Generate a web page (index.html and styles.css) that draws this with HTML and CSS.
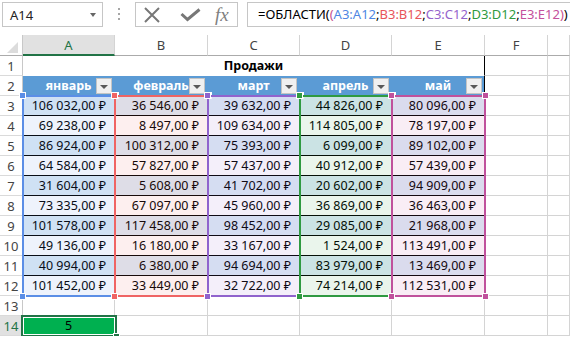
FILE: index.html
```html
<!DOCTYPE html>
<html lang="ru">
<head>
    <meta charset="UTF-8">
    <meta name="viewport" content="width=device-width, initial-scale=1.0">
    <title>Продажи</title>
    <link rel="stylesheet" href="styles.css">
</head>
<body>
    <div class="formula-bar">
        <div class="name-box">A14<span class="caret"></span></div>
        <div class="grip"><i></i><i></i><i></i></div>
        <div class="fx-buttons">
            <svg class="ico-cancel" width="18" height="16" viewBox="0 0 18 16">
                <path d="M2 1 L16 15 M16 1 L2 15" stroke="#777" stroke-width="2" fill="none"/>
            </svg>
            <svg class="ico-enter" width="21" height="14" viewBox="0 0 21 14">
                <path d="M1.5 6 L7.5 11.5 L19.5 1.5" stroke="#777" stroke-width="3" fill="none"/>
            </svg>
            <span class="fx">fx</span>
        </div>
        <div class="formula">=ОБЛАСТИ(<span class="paren">(</span><span class="ref-a">A3:A12</span>;<span class="ref-b">B3:B12</span>;<span class="ref-c">C3:C12</span>;<span class="ref-d">D3:D12</span>;<span class="ref-e">E3:E12</span><span class="paren">)</span>)</div>
    </div>

    <div class="sheet">
        <!-- column headers -->
        <div class="row">
            <div class="cell corner">
                <svg width="11" height="11" viewBox="0 0 11 11"><path d="M11 0 L11 11 L0 11 Z" fill="#dcdcdc"/></svg>
            </div>
            <div class="cell ch sel">A</div>
            <div class="cell ch">B</div>
            <div class="cell ch">C</div>
            <div class="cell ch">D</div>
            <div class="cell ch">E</div>
            <div class="cell ch">F</div>
            <div class="cell ch"></div>
        </div>

        <div class="row">
            <div class="cell rh">1</div>
            <div class="cell title">Продажи</div>
            <div class="cell"></div>
            <div class="cell"></div>
        </div>

        <div class="row">
            <div class="cell rh">2</div>
            <div class="cell th"><span>январь</span><b class="filter"></b></div>
            <div class="cell th"><span>февраль</span><b class="filter"></b></div>
            <div class="cell th"><span>март</span><b class="filter"></b></div>
            <div class="cell th"><span>апрель</span><b class="filter"></b></div>
            <div class="cell th last"><span>май</span><b class="filter"></b></div>
            <div class="cell"></div>
            <div class="cell"></div>
        </div>

        <div class="row odd">
            <div class="cell rh">3</div>
            <div class="cell n">106 032,00 ₽</div>
            <div class="cell n">36 546,00 ₽</div>
            <div class="cell n">39 632,00 ₽</div>
            <div class="cell n">44 826,00 ₽</div>
            <div class="cell n">80 096,00 ₽</div>
            <div class="cell"></div>
            <div class="cell"></div>
        </div>
        <div class="row">
            <div class="cell rh">4</div>
            <div class="cell n">69 238,00 ₽</div>
            <div class="cell n">8 497,00 ₽</div>
            <div class="cell n">109 634,00 ₽</div>
            <div class="cell n">114 805,00 ₽</div>
            <div class="cell n">78 197,00 ₽</div>
            <div class="cell"></div>
            <div class="cell"></div>
        </div>
        <div class="row odd">
            <div class="cell rh">5</div>
            <div class="cell n">86 924,00 ₽</div>
            <div class="cell n">100 312,00 ₽</div>
            <div class="cell n">75 393,00 ₽</div>
            <div class="cell n">6 099,00 ₽</div>
            <div class="cell n">89 102,00 ₽</div>
            <div class="cell"></div>
            <div class="cell"></div>
        </div>
        <div class="row">
            <div class="cell rh">6</div>
            <div class="cell n">64 584,00 ₽</div>
            <div class="cell n">57 827,00 ₽</div>
            <div class="cell n">57 437,00 ₽</div>
            <div class="cell n">40 912,00 ₽</div>
            <div class="cell n">57 439,00 ₽</div>
            <div class="cell"></div>
            <div class="cell"></div>
        </div>
        <div class="row odd">
            <div class="cell rh">7</div>
            <div class="cell n">31 604,00 ₽</div>
            <div class="cell n">5 608,00 ₽</div>
            <div class="cell n">41 702,00 ₽</div>
            <div class="cell n">20 602,00 ₽</div>
            <div class="cell n">94 909,00 ₽</div>
            <div class="cell"></div>
            <div class="cell"></div>
        </div>
        <div class="row">
            <div class="cell rh">8</div>
            <div class="cell n">73 335,00 ₽</div>
            <div class="cell n">67 097,00 ₽</div>
            <div class="cell n">45 960,00 ₽</div>
            <div class="cell n">36 869,00 ₽</div>
            <div class="cell n">36 463,00 ₽</div>
            <div class="cell"></div>
            <div class="cell"></div>
        </div>
        <div class="row odd">
            <div class="cell rh">9</div>
            <div class="cell n">101 578,00 ₽</div>
            <div class="cell n">117 458,00 ₽</div>
            <div class="cell n">98 452,00 ₽</div>
            <div class="cell n">29 085,00 ₽</div>
            <div class="cell n">21 968,00 ₽</div>
            <div class="cell"></div>
            <div class="cell"></div>
        </div>
        <div class="row">
            <div class="cell rh">10</div>
            <div class="cell n">49 136,00 ₽</div>
            <div class="cell n">16 180,00 ₽</div>
            <div class="cell n">33 167,00 ₽</div>
            <div class="cell n">1 524,00 ₽</div>
            <div class="cell n">113 491,00 ₽</div>
            <div class="cell"></div>
            <div class="cell"></div>
        </div>
        <div class="row odd">
            <div class="cell rh">11</div>
            <div class="cell n">40 994,00 ₽</div>
            <div class="cell n">6 380,00 ₽</div>
            <div class="cell n">94 694,00 ₽</div>
            <div class="cell n">83 979,00 ₽</div>
            <div class="cell n">13 469,00 ₽</div>
            <div class="cell"></div>
            <div class="cell"></div>
        </div>
        <div class="row">
            <div class="cell rh">12</div>
            <div class="cell n">101 452,00 ₽</div>
            <div class="cell n">33 449,00 ₽</div>
            <div class="cell n">32 722,00 ₽</div>
            <div class="cell n">74 214,00 ₽</div>
            <div class="cell n">112 531,00 ₽</div>
            <div class="cell"></div>
            <div class="cell"></div>
        </div>

        <div class="row">
            <div class="cell rh">13</div>
            <div class="cell"></div>
            <div class="cell"></div>
            <div class="cell"></div>
            <div class="cell"></div>
            <div class="cell"></div>
            <div class="cell"></div>
            <div class="cell"></div>
        </div>
        <div class="row">
            <div class="cell rh sel">14</div>
            <div class="cell active">5</div>
            <div class="cell"></div>
            <div class="cell"></div>
            <div class="cell"></div>
            <div class="cell"></div>
            <div class="cell"></div>
            <div class="cell"></div>
        </div>

        <!-- formula range highlights and active cell, drawn over the grid -->
        <div class="overlay">
            <div class="range range-a"><i class="h tl"></i><i class="h tr"></i><i class="h bl"></i><i class="h br"></i></div>
            <div class="range range-b"><i class="h tl"></i><i class="h tr"></i><i class="h bl"></i><i class="h br"></i></div>
            <div class="range range-c"><i class="h tl"></i><i class="h tr"></i><i class="h bl"></i><i class="h br"></i></div>
            <div class="range range-d"><i class="h tl"></i><i class="h tr"></i><i class="h bl"></i><i class="h br"></i></div>
            <div class="range range-e"><i class="h tl"></i><i class="h tr"></i><i class="h bl"></i><i class="h br"></i></div>
            <div class="selection"><i class="sel-handle"></i></div>
        </div>
    </div>
</body>
</html>
```

FILE: styles.css
```css
body {
    margin: 0;
    width: 570px;
    overflow: hidden;
    font-family: "Noto Sans", "DejaVu Sans", sans-serif;
    background-color: #fff;
    color: #000;
}

/* formula bar */
.formula-bar {
    display: flex;
    align-items: flex-start;
    height: 35px;
    padding: 2px 0 0 2px;
    box-sizing: border-box;
}

.name-box {
    display: flex;
    justify-content: space-between;
    align-items: center;
    width: 101px;
    height: 25px;
    box-sizing: border-box;
    border: 1px solid #c6c6c6;
    padding: 0 6px 0 7px;
    font-size: 13px;
    color: #222;
}

.caret {
    width: 0;
    height: 0;
    border-left: 3px solid transparent;
    border-right: 3px solid transparent;
    border-top: 4px solid #666;
}

.grip {
    display: flex;
    flex-direction: column;
    align-items: center;
    gap: 3px;
    width: 32px;
    padding-top: 6px;
}

.grip i {
    width: 2px;
    height: 2px;
    background-color: #a6a6a6;
}

.fx-buttons {
    display: flex;
    align-items: center;
    width: 103px;
    height: 25px;
    box-sizing: border-box;
    border: 1px solid #c6c6c6;
    padding-left: 7px;
}

.ico-enter {
    margin-left: 19px;
}

.fx {
    margin-left: 14px;
    font-family: "Liberation Serif", serif;
    font-style: italic;
    font-size: 19px;
    line-height: 23px;
    color: #808080;
}

.formula {
    flex: 1;
    height: 25px;
    box-sizing: border-box;
    margin-left: 9px;
    border: 1px solid #c6c6c6;
    border-right: none;
    padding-left: 10px;
    font-size: 13px;
    line-height: 23px;
    white-space: nowrap;
    overflow: hidden;
}

.paren { color: #c8508f; }
.ref-a { color: #4f86e3; }
.ref-b { color: #e8545a; }
.ref-c { color: #9563cc; }
.ref-d { color: #2f9a3e; }
.ref-e { color: #c4509c; }

/* sheet grid */
.sheet,
.overlay {
    display: grid;
    grid-template-columns: 23px 92px 93px 92px 92px 93px 63px 1fr;
    grid-template-rows: 21px repeat(14, 20px);
}

.sheet {
    position: relative;
    font-size: 12.5px;
}

.row {
    display: contents;
}

.cell {
    box-sizing: border-box;
    border-right: 1px solid #d4d4d4;
    border-bottom: 1px solid #d4d4d4;
    line-height: 20px;
    white-space: nowrap;
    overflow: hidden;
}

.corner {
    display: flex;
    justify-content: flex-end;
    align-items: flex-end;
    padding: 0 4px 2px 0;
    border-right-color: #c8c8c8;
    border-bottom-color: #ababab;
}

.ch {
    text-align: center;
    font-size: 13px;
    line-height: 21px;
    color: #444;
    border-bottom-color: #ababab;
}

.ch.sel {
    background-color: #e1e1e1;
    color: #217346;
    border-bottom: 2px solid #217346;
}

.rh {
    text-align: center;
    font-size: 13px;
    color: #444;
    border-right-color: #c8c8c8;
    border-bottom-color: #dadada;
}

.rh.sel {
    background-color: #e1e1e1;
    color: #217346;
}

.title {
    grid-column: span 5;
    text-align: center;
    font-weight: bold;
    border-right-color: #000;
    border-bottom-color: #fff;
}

.th {
    display: grid;
    background-color: #5b9bd5;
    color: #fff;
    font-weight: bold;
    border-right-color: #5b9bd5;
}

.th > * {
    grid-area: 1 / 1;
}

.th span {
    justify-self: center;
}

.th.last {
    border-right-color: #000;
}

.filter {
    justify-self: end;
    align-self: end;
    display: flex;
    justify-content: center;
    align-items: center;
    width: 16px;
    height: 16px;
    box-sizing: border-box;
    margin: 0 2px 2px 0;
    background-color: #f0f0f0;
    border: 1px solid #c4c4c4;
}

.filter::after {
    content: "";
    border-left: 4px solid transparent;
    border-right: 4px solid transparent;
    border-top: 4px solid #595959;
    margin-top: 1px;
}

.n {
    text-align: right;
    padding-right: 8px;
    background-color: #fff;
    border-bottom-color: #000;
}

.odd .n {
    background-color: #ddebf7;
}

.active {
    background-color: #00b050;
    text-align: center;
}

/* overlay with formula references */
.overlay {
    position: absolute;
    top: 0;
    left: 0;
    right: 0;
    bottom: 0;
    pointer-events: none;
}

.range {
    position: relative;
    grid-row: 4 / 14;
    margin: -1px;
    border: 2px solid;
}

.range-a { grid-column: 2; border-color: #5b8ee6; background-color: rgba(91, 142, 230, 0.1); }
.range-b { grid-column: 3; border-color: #ef6464; background-color: rgba(239, 100, 100, 0.1); }
.range-c { grid-column: 4; border-color: #9063cd; background-color: rgba(144, 99, 205, 0.1); }
.range-d { grid-column: 5; border-color: #2f9a41; background-color: rgba(47, 154, 65, 0.1); }
.range-e { grid-column: 6; border-color: #c0519c; background-color: rgba(192, 81, 156, 0.1); }

.h {
    position: absolute;
    width: 5px;
    height: 5px;
    border: 1px solid #fff;
}

.range-a .h { background-color: #5b8ee6; }
.range-b .h { background-color: #ef6464; }
.range-c .h { background-color: #9063cd; }
.range-d .h { background-color: #2f9a41; }
.range-e .h { background-color: #c0519c; }

.h.tl { top: -5px; left: -5px; }
.h.tr { top: -5px; right: -5px; }
.h.bl { bottom: -5px; left: -5px; }
.h.br { bottom: -5px; right: -5px; }

.selection {
    position: relative;
    grid-column: 2;
    grid-row: 15;
    margin: -1px -2px -1px -2px;
    border: 2px solid #217346;
    box-shadow: inset 0 0 0 1px #fff;
}

.sel-handle {
    position: absolute;
    right: -5px;
    bottom: -5px;
    width: 5px;
    height: 5px;
    background-color: #217346;
    border: 1px solid #fff;
}
```
